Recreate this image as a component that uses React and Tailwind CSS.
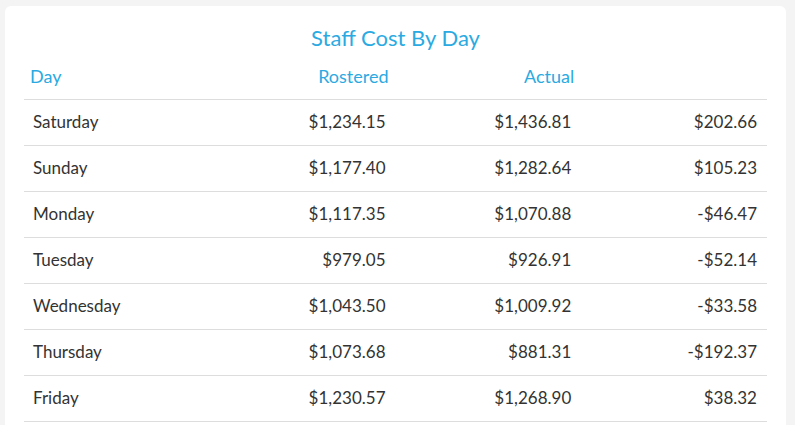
import React from "react";

const ROWS = [
  { day: "Saturday", rostered: "$1,234.15", actual: "$1,436.81", diff: "$202.66" },
  { day: "Sunday", rostered: "$1,177.40", actual: "$1,282.64", diff: "$105.23" },
  { day: "Monday", rostered: "$1,117.35", actual: "$1,070.88", diff: "-$46.47" },
  { day: "Tuesday", rostered: "$979.05", actual: "$926.91", diff: "-$52.14" },
  { day: "Wednesday", rostered: "$1,043.50", actual: "$1,009.92", diff: "-$33.58" },
  { day: "Thursday", rostered: "$1,073.68", actual: "$881.31", diff: "-$192.37" },
  { day: "Friday", rostered: "$1,230.57", actual: "$1,268.90", diff: "$38.32" },
];

const App = () => {
  return (
    <div
      className="min-h-[425px] bg-[#f4f4f4] pl-[5px] pt-[6px] overflow-hidden"
      style={{ fontFamily: "Lato, 'Open Sans', sans-serif" }}
    >
      <div className="w-[781px] bg-white rounded-md px-[19px] pt-[18px] pb-4">
        {/* Title */}
        <h2 className="h-[28px] leading-[28px] text-center text-[22px] text-[#2baae2]">
          Staff Cost By Day
        </h2>

        {/* Header */}
        <div className="grid grid-cols-4 h-[48px] items-center pt-[2px] border-b border-[#dddddd] text-[18px] text-[#2baae2]">
          <div className="pl-[6px]">Day</div>
          <div className="text-right pr-[7px]">Rostered</div>
          <div className="text-right pr-[7px]">Actual</div>
          <div></div>
        </div>

        {/* Rows */}
        {ROWS.map((r) => (
          <div
            key={r.day}
            className="grid grid-cols-4 h-[46px] items-center pb-[1px] border-b border-[#dddddd] text-[17px] text-[#333333]"
          >
            <div className="pl-[9px]">{r.day}</div>
            <div className="text-right pr-[10px]">{r.rostered}</div>
            <div className="text-right pr-[10px]">{r.actual}</div>
            <div className="text-right pr-[10px]">{r.diff}</div>
          </div>
        ))}
      </div>
    </div>
  );
};

export default App;
